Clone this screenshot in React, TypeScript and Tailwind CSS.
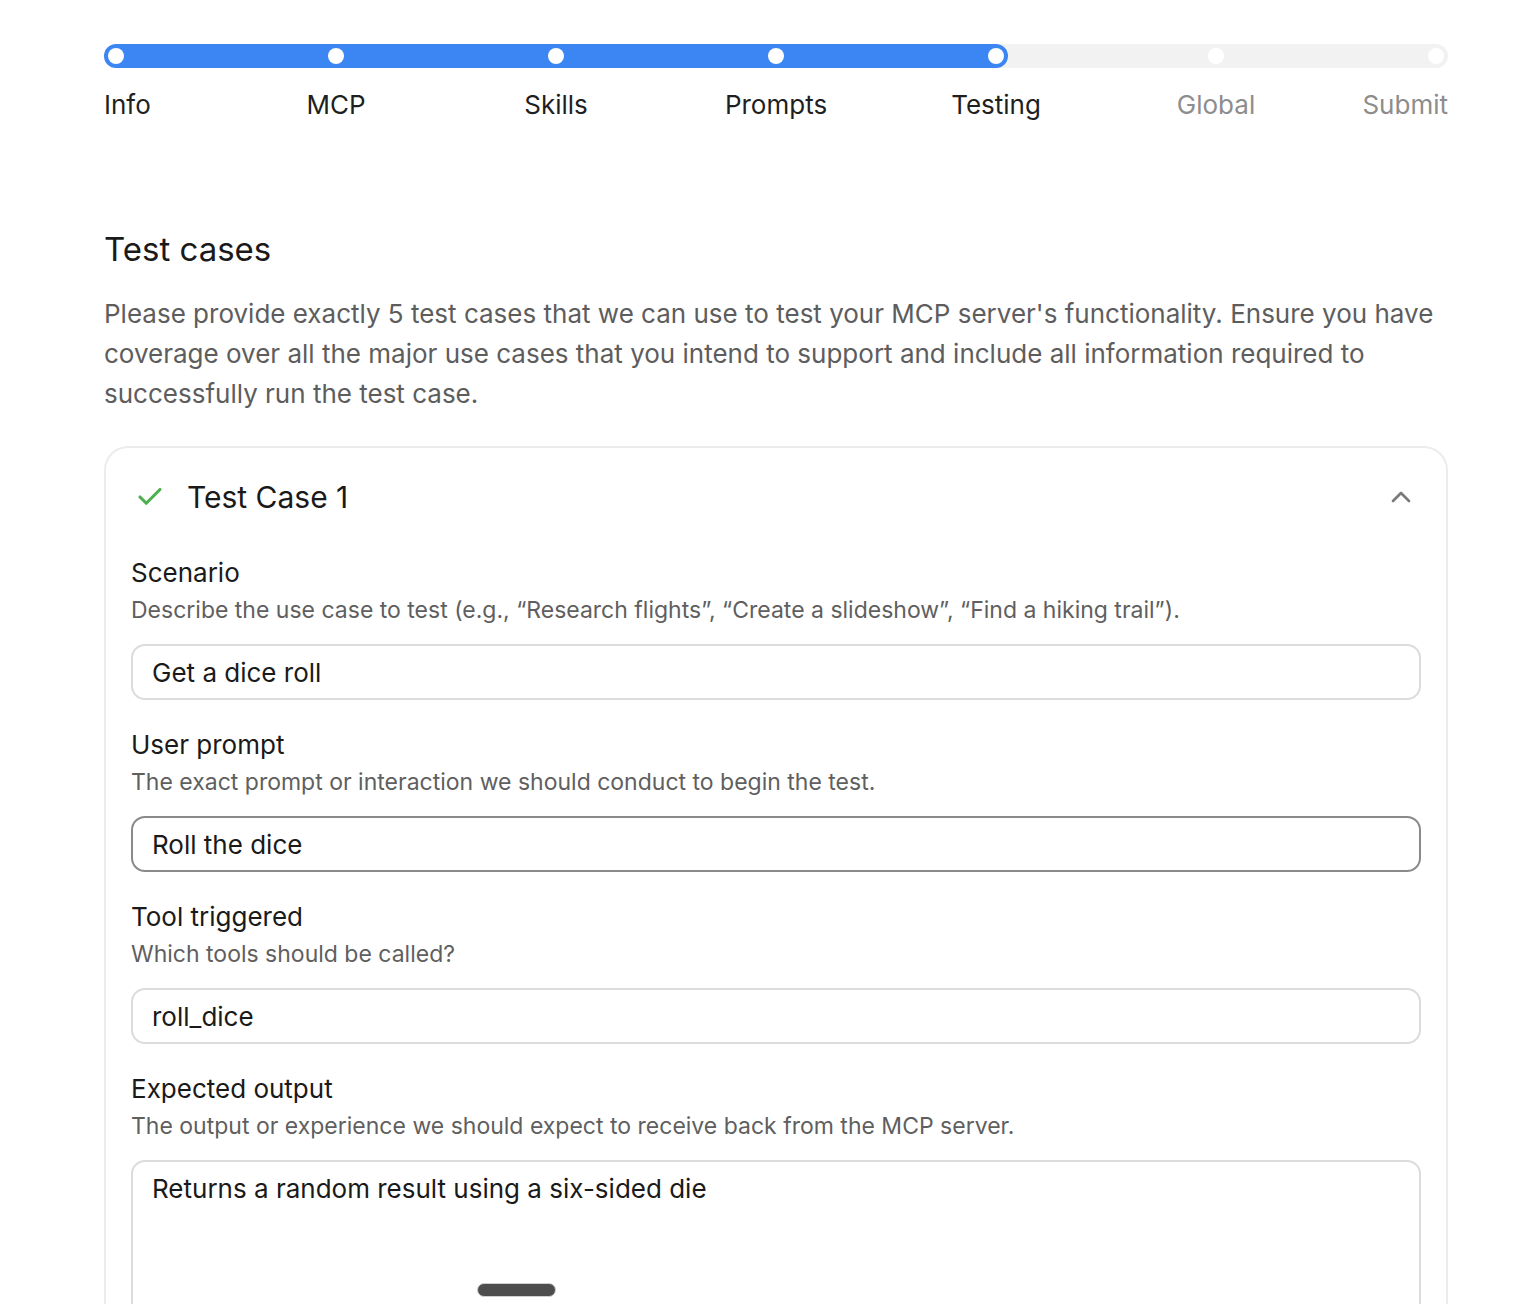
import React from 'react';
import { Check, ChevronUp } from 'lucide-react';

const steps = ['Info', 'MCP', 'Skills', 'Prompts', 'Testing', 'Global', 'Submit'];
const current = 4;

interface FieldProps {
  label: string;
  hint: string;
  value: string;
  focused?: boolean;
}

const Field: React.FC<FieldProps> = ({ label, hint, value, focused }) => (
  <div className="flex flex-col">
    <div className="text-[26px] leading-[34px] text-[#1a1a1a]">{label}</div>
    <div className="text-[23px] leading-[30px] text-[#5f5f5f] mt-[5px]">{hint}</div>
    <div
      className={
        focused
          ? 'mt-[19px] h-[56px] rounded-[14px] border-2 border-[#8a8a8a] px-[19px] flex items-center text-[26px] text-[#1a1a1a]'
          : 'mt-[19px] h-[56px] rounded-[14px] border-2 border-[#dcdcdc] px-[19px] flex items-center text-[26px] text-[#1a1a1a]'
      }
    >
      {value}
    </div>
  </div>
);

export default function App() {
  return (
    <div className="w-[1518px] h-[1304px] overflow-hidden bg-white font-['Inter',sans-serif] relative">
      <div className="ml-[104px] w-[1344px] pt-[44px]">
        {/* Stepper */}
        <div className="relative h-[24px] rounded-full bg-[#f2f2f2]">
          <div className="absolute left-0 top-0 h-full w-[904px] rounded-full bg-[#3b86f3]" />
          <div className="absolute inset-0 flex items-center justify-between px-[4px]">
            {steps.map((s) => (
              <div key={s} className="w-[16px] h-[16px] rounded-full bg-white" />
            ))}
          </div>
        </div>
        <div className="relative h-[40px] mt-[17px] text-[26px] leading-[40px]">
          {steps.map((s, i) => {
            const color = i <= current ? 'text-[#1f1f1f]' : 'text-[#8d8d8d]';
            if (i === 0) return <span key={s} className={`absolute left-0 ${color}`}>{s}</span>;
            if (i === steps.length - 1) return <span key={s} className={`absolute right-0 ${color}`}>{s}</span>;
            return (
              <span key={s} className={`absolute -translate-x-1/2 ${color}`} style={{ left: 12 + i * 220 }}>
                {s}
              </span>
            );
          })}
        </div>

        {/* Heading */}
        <h1 className="mt-[104px] text-[33px] leading-[40px] text-[#1a1a1a]">Test cases</h1>
        <p className="mt-[25px] text-[26px] leading-[40px] text-[#5d5d5d]">
          Please provide exactly 5 test cases that we can use to test your MCP server's functionality. Ensure you have
          coverage over all the major use cases that you intend to support and include all information required to
          successfully run the test case.
        </p>

        {/* Card */}
        <div className="mt-[32px] rounded-t-[24px] border-2 border-b-0 border-[#ececec] px-[25px] pt-[29px] h-[900px]">
          <div className="flex items-center justify-between">
            <div className="flex items-center gap-[22px] pl-[4px]">
              <Check className="w-[30px] h-[30px] text-[#4cb050]" strokeWidth={2.5} />
              <span className="text-[30px] leading-[40px] text-[#1a1a1a]">Test Case 1</span>
            </div>
            <ChevronUp className="w-[32px] h-[32px] text-[#7a7a7a] mr-[4px]" strokeWidth={2} />
          </div>

          <div className="mt-[39px] flex flex-col gap-[28px]">
            <Field
              label="Scenario"
              hint="Describe the use case to test (e.g., “Research flights”, “Create a slideshow”, “Find a hiking trail”)."
              value="Get a dice roll"
            />
            <Field
              label="User prompt"
              hint="The exact prompt or interaction we should conduct to begin the test."
              value="Roll the dice"
              focused
            />
            <Field label="Tool triggered" hint="Which tools should be called?" value="roll_dice" />
            <div className="flex flex-col">
              <div className="text-[26px] leading-[34px] text-[#1a1a1a]">Expected output</div>
              <div className="text-[23px] leading-[30px] text-[#5f5f5f] mt-[5px]">
                The output or experience we should expect to receive back from the MCP server.
              </div>
              <div className="mt-[19px] h-[200px] rounded-[14px] border-2 border-[#dcdcdc] px-[19px] pt-[9px] text-[26px] leading-[36px] text-[#1a1a1a]">
                Returns a random result using a six-sided die
              </div>
            </div>
          </div>
        </div>
      </div>
      <div className="absolute left-[477px] top-[1283px] w-[79px] h-[14px] rounded-full bg-[#4d4d4d] border border-[#cfcfcf]" />
    </div>
  );
}
